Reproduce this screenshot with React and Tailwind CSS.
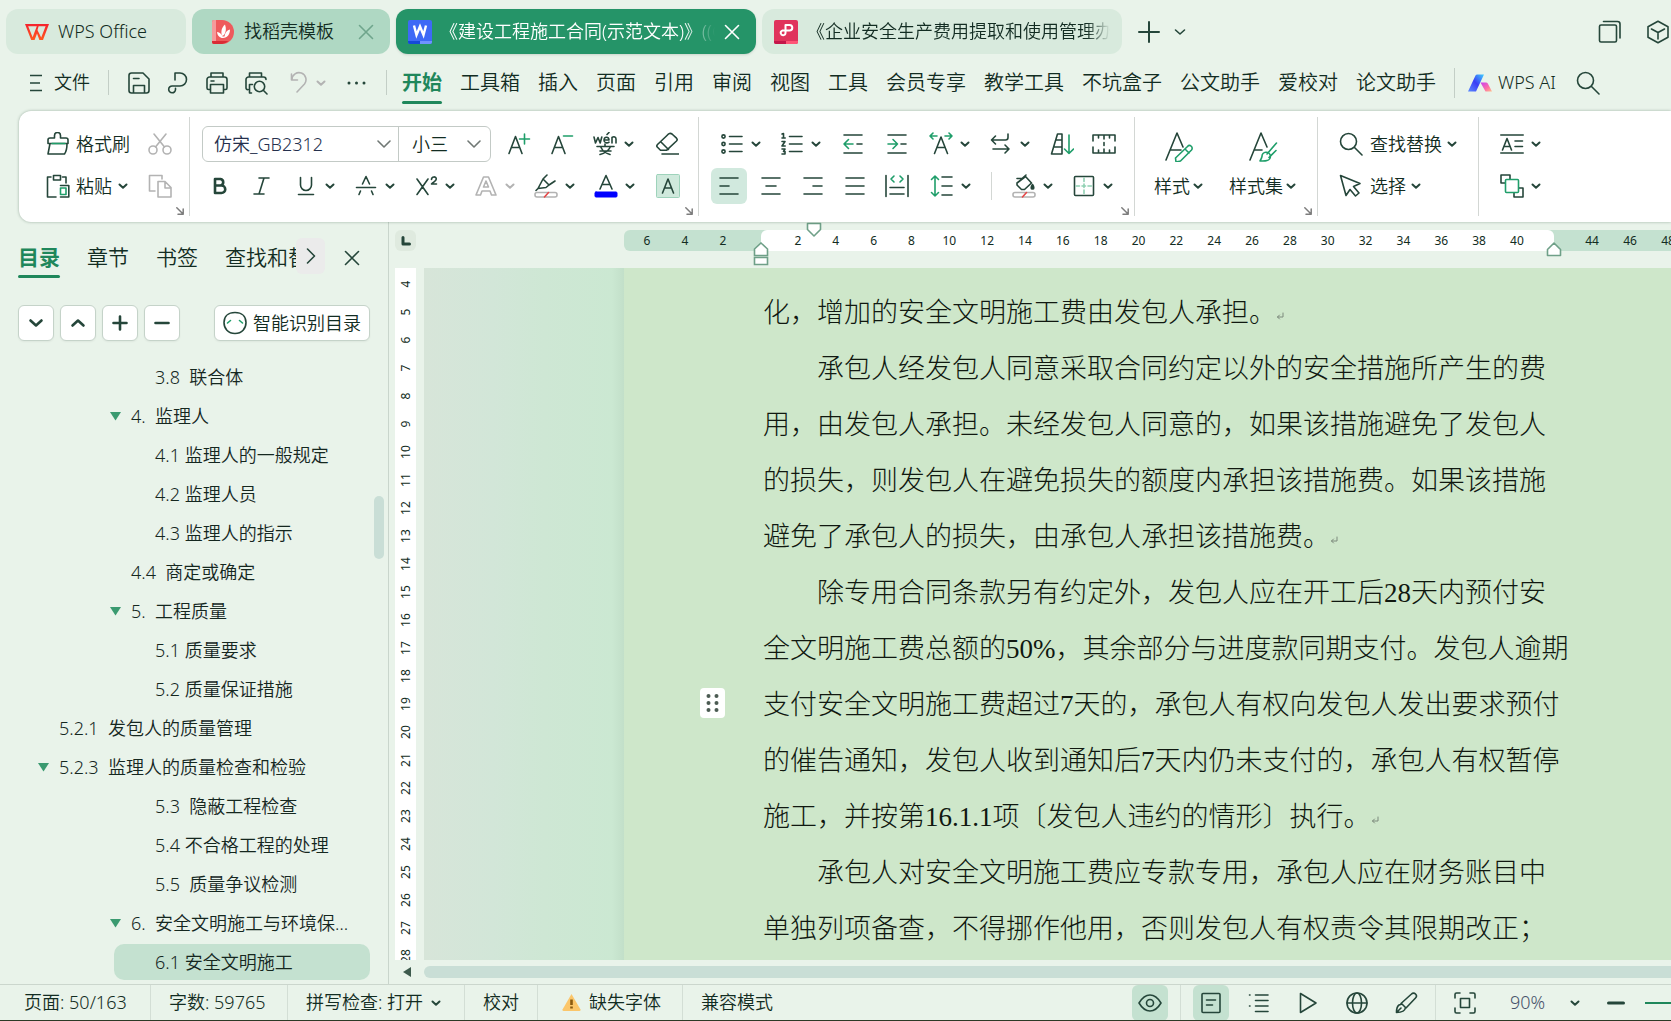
import React, { useState } from 'react';
import clsx from 'clsx';

const DARK = '#25463a';
const GREEN = '#1f9e6a';
const GRAY = '#b3b3b3';

const MENUS = [
  '开始', '工具箱', '插入', '页面', '引用', '审阅', '视图', '工具',
  '会员专享', '教学工具', '不坑盒子', '公文助手', '爱校对', '论文助手',
];

const PANEL_TABS = ['目录', '章节', '书签', '查找和替换'];

const OUTLINE = [
  { text: '3.8  联合体', pad: 'pl-[155px]' },
  { text: '4.  监理人', pad: 'pl-[131px]', arrow: 'left-[110px]' },
  { text: '4.1 监理人的一般规定', pad: 'pl-[155px]' },
  { text: '4.2 监理人员', pad: 'pl-[155px]' },
  { text: '4.3 监理人的指示', pad: 'pl-[155px]' },
  { text: '4.4  商定或确定', pad: 'pl-[131px]' },
  { text: '5.  工程质量', pad: 'pl-[131px]', arrow: 'left-[110px]' },
  { text: '5.1 质量要求', pad: 'pl-[155px]' },
  { text: '5.2 质量保证措施', pad: 'pl-[155px]' },
  { text: '5.2.1  发包人的质量管理', pad: 'pl-[59px]' },
  { text: '5.2.3  监理人的质量检查和检验', pad: 'pl-[59px]', arrow: 'left-[38px]' },
  { text: '5.3  隐蔽工程检查', pad: 'pl-[155px]' },
  { text: '5.4 不合格工程的处理', pad: 'pl-[155px]' },
  { text: '5.5  质量争议检测', pad: 'pl-[155px]' },
  { text: '6.  安全文明施工与环境保…', pad: 'pl-[131px]', arrow: 'left-[110px]' },
];

const LINES = [
  { text: '化，增加的安全文明施工费由发包人承担。', end: true },
  { text: '承包人经发包人同意采取合同约定以外的安全措施所产生的费', indent: true },
  { text: '用，由发包人承担。未经发包人同意的，如果该措施避免了发包人' },
  { text: '的损失，则发包人在避免损失的额度内承担该措施费。如果该措施' },
  { text: '避免了承包人的损失，由承包人承担该措施费。', end: true },
  { text: '除专用合同条款另有约定外，发包人应在开工后28天内预付安', indent: true },
  { text: '全文明施工费总额的50%，其余部分与进度款同期支付。发包人逾期' },
  { text: '支付安全文明施工费超过7天的，承包人有权向发包人发出要求预付' },
  { text: '的催告通知，发包人收到通知后7天内仍未支付的，承包人有权暂停' },
  { text: '施工，并按第16.1.1项〔发包人违约的情形〕执行。', end: true },
  { text: '承包人对安全文明施工费应专款专用，承包人应在财务账目中', indent: true },
  { text: '单独列项备查，不得挪作他用，否则发包人有权责令其限期改正；' },
];

const range = (from, to, step = 1) => {
  const out = [];
  for (let i = from; i <= to; i += step) out.push(i);
  return out;
};

function Icon({ children, color = DARK, size = 24, box = 24, width = 1.6, className }) {
  return (
    <svg
      className={clsx('shrink-0', className)}
      width={size}
      height={size}
      viewBox={`0 0 ${box} ${box}`}
      fill="none"
      stroke={color}
      strokeWidth={width}
      strokeLinecap="round"
      strokeLinejoin="round"
      aria-hidden="true"
    >
      {children}
    </svg>
  );
}

function Caret({ color = DARK }) {
  return (
    <Icon size={10} box={10} width={2} color={color}>
      <path d="M1.5 3.5 5 6.8l3.500-3.300" />
    </Icon>
  );
}

function CloseIcon({ color, size = 16 }) {
  return (
    <Icon size={size} box={16} color={color}>
      <path d="M1.500 1.500l13 13M14.500 1.500l-13 13" />
    </Icon>
  );
}

function Tool({ label, caret, disabled, className, children }) {
  return (
    <button type="button" aria-label={label} className={clsx('flex h-9 shrink-0 items-center gap-[7px]', className)}>
      {children}
      {caret && <Caret color={disabled ? GRAY : DARK} />}
    </button>
  );
}

function Launcher() {
  return (
    <button type="button" aria-label="更多设置" className="absolute right-[5px] bottom-px">
      <Icon size={8} box={8} color="#7d7d7d" width={1.5}>
        <path d="M.8.8l6 6M7.200 2v5.200H2" />
      </Icon>
    </button>
  );
}

function Group({ className, launcher, last, children }) {
  return (
    <section className={clsx('relative h-[99px] shrink-0', !last && 'border-r border-[#d3d7d4]', className)}>
      {children}
      {launcher && <Launcher />}
    </section>
  );
}

function TitleBar() {
  return (
    <header className="flex shrink-0 items-center gap-1.5 pt-[9px] pl-1.5">
      <button type="button" className="flex h-[45px] w-[180px] shrink-0 items-center gap-[9px] rounded-xl bg-[#d8eadd] pl-[19px]">
        <svg width="24" height="18" viewBox="0 0 24 18" aria-hidden="true">
          <defs>
            <linearGradient id="wps" x1="0" y1="0" x2="0" y2="1">
              <stop offset="0" stopColor="#f5222d" />
              <stop offset="1" stopColor="#ff5a1f" />
            </linearGradient>
          </defs>
          <path d="M0 1h24l-6 16h-3.600L12 10.500 9.600 17H6.200zM3.200 3.200l4.400 11 4.200-11zM12.900 8l3.300 6.400L20.600 3.200h-7L12.500 7z" fill="url(#wps)" fillRule="evenodd" />
        </svg>
        WPS Office
      </button>
      <button type="button" className="flex h-[45px] w-[198px] shrink-0 items-center rounded-xl bg-[#afd8c3] pl-5">
        <svg width="22" height="24" viewBox="0 0 22 24" aria-hidden="true">
          <path d="M0 2a2 2 0 0 1 2-2h8a12 12 0 0 1 0 24H2a2 2 0 0 1-2-2z" fill="#ee5a5c" />
          <path d="M0 2a2 2 0 0 1 2-2h2v21H0z" fill="#f59a9b" />
          <path d="M0 21h16.500A12 12 0 0 1 10 24H2a2 2 0 0 1-2-2z" fill="#d92b35" />
          <path d="M10 16C8.500 11 10 7 13 4.500c1.500 4 1 7.500-1 10.500z" fill="#fff" />
          <path d="M12.500 16.500c.5-4 2.500-6.500 5.500-7 0 4.500-2.500 8.500-7 8.500-3.500 0-5.500-2.500-6-6 3 .5 4.500 2 5.500 4.500z" fill="#fff" />
        </svg>
        <span className="ml-2.5">找稻壳模板</span>
        <span className="ml-6"><CloseIcon color="#6fa58c" /></span>
      </button>
      <button type="button" className="flex h-[45px] w-[360px] shrink-0 items-center rounded-xl bg-[#259468] pl-3 text-white shadow-sm">
        <svg className="shrink-0" width="24" height="24" viewBox="0 0 24 24" aria-hidden="true">
          <rect width="24" height="24" rx="2" fill="#3e69f6" />
          <path d="M0 21h12v3H2a2 2 0 0 1-2-2z" fill="#1549d8" />
          <path d="M12 21h12v1a2 2 0 0 1-2 2H12z" fill="#6f93ff" />
          <path d="M6 5.500 8.500 15 12 6.500 15.500 15 18 5.500" fill="none" stroke="#fff" strokeWidth="2.400" />
        </svg>
        <span className="ml-2 w-[276px] overflow-hidden text-left whitespace-nowrap [mask-image:linear-gradient(to_right,#000_245px,transparent_275px)]">《建设工程施工合同(示范文本)》((G</span>
        <span className="ml-2"><CloseIcon color="#fff" /></span>
      </button>
      <button type="button" className="flex h-[45px] w-[360px] shrink-0 items-center rounded-xl bg-[#d8eadd] pl-3">
        <svg className="shrink-0" width="24" height="24" viewBox="0 0 24 24" aria-hidden="true">
          <rect width="24" height="24" rx="2" fill="#e0335c" />
          <path d="M0 21h12v3H2a2 2 0 0 1-2-2z" fill="#c4164a" />
          <path d="M12 21h12v1a2 2 0 0 1-2 2H12z" fill="#ff5577" />
          <path d="M11.500 10.500V5h4a2.800 2.800 0 0 1 0 5.600H8.200a2.400 2.400 0 1 0 3.300 2.400z" fill="none" stroke="#fff" strokeWidth="2" strokeLinejoin="round" />
        </svg>
        <span className="ml-[9px] w-[303px] overflow-hidden text-left whitespace-nowrap [mask-image:linear-gradient(to_right,#000_280px,transparent_303px)]">《企业安全生产费用提取和使用管理办法》</span>
      </button>
      <button type="button" aria-label="新建" className="ml-[9px]">
        <Icon width={2}><path d="M12 2v20M2 12h20" /></Icon>
      </button>
      <button type="button" aria-label="标签列表" className="ml-[7px]">
        <Icon size={12} box={12}><path d="M1.500 4 6 8l4.500-4" /></Icon>
      </button>
      <div className="ml-auto flex gap-6 pr-px">
        <button type="button" aria-label="窗口">
          <Icon>
            <rect x="1.500" y="5" width="17" height="17" rx="1.500" />
            <path d="M5.500 1.500h14A2.500 2.500 0 0 1 22 4v14" />
          </Icon>
        </button>
        <button type="button" aria-label="应用">
          <Icon>
            <path d="M12 1.200 22 6.700v10.600l-10 5.500-10-5.500V6.700zM5.500 9l6.500 3.500L18.500 9M12 12.500v6.500" />
          </Icon>
        </button>
      </div>
    </header>
  );
}

function MenuBar() {
  const [active, setActive] = useState('开始');
  return (
    <nav className="flex h-[57px] shrink-0 items-center pl-[30px]">
      <button type="button" className="flex shrink-0 items-center gap-3">
        <svg width="12" height="18" viewBox="0 0 12 18" stroke={DARK} strokeWidth="1.600" aria-hidden="true">
          <path d="M0 1.500h12M0 9h10M0 16.500h12" />
        </svg>
        文件
      </button>
      <span className="ml-[18px] h-[25px] w-px bg-[#c3cec6]" />
      <div className="ml-[18px] flex items-center gap-[15px]">
        <button type="button" aria-label="保存">
          <Icon><path d="M6.500 22H4.500A2.500 2.500 0 0 1 2 19.500v-15A2.500 2.500 0 0 1 4.500 2H16l6 6v11.500a2.500 2.500 0 0 1-2.500 2.500zM6.500 22v-7.500h11V22M6.500 7.500H12" /></Icon>
        </button>
        <button type="button" aria-label="分享">
          <Icon><path d="M9 9V2h5a6.500 6.500 0 0 1 0 13H6.200a3.400 3.400 0 1 0 3.300 3.400v-1" /></Icon>
        </button>
        <button type="button" aria-label="打印">
          <Icon><path d="M6 6V2h12v4M5 18.500H3.500A1.500 1.500 0 0 1 2 17V8.500A2.500 2.500 0 0 1 4.500 6h15A2.500 2.500 0 0 1 22 8.500V17a1.500 1.500 0 0 1-1.500 1.500H19M5.500 13.500h13V22h-13zM6 10h3" /></Icon>
        </button>
        <button type="button" aria-label="打印预览">
          <Icon><path d="M5.500 6V2h12v4M4 18.500A1.500 1.500 0 0 1 2 17V8.500A2.500 2.500 0 0 1 4.500 6h15A2.500 2.500 0 0 1 22 8.500M7.500 22H5.500v-8.500h3" /><circle cx="15.500" cy="15.500" r="5.200" /><path d="M19.500 19.500 23 23" /></Icon>
        </button>
        <button type="button" aria-label="撤销" className="ml-1.5 flex items-center gap-[3px]">
          <Icon color={GRAY}><path d="M2.500 3v6h6M3 8.500A7 7 0 1 1 15.500 13L8 21" /></Icon>
          <Caret color={GRAY} />
        </button>
        <button type="button" aria-label="更多">
          <svg width="30" height="24" viewBox="0 0 30 24" fill={DARK} aria-hidden="true">
            <circle cx="8" cy="12" r="1.500" /><circle cx="15.500" cy="12" r="1.500" /><circle cx="23" cy="12" r="1.500" />
          </svg>
        </button>
      </div>
      <span className="ml-[15px] h-[25px] w-px bg-[#c3cec6]" />
      <div className="ml-[15px] flex shrink-0 gap-[18px] text-[20px]">
        {MENUS.map((name) => (
          <button
            key={name}
            type="button"
            onClick={() => setActive(name)}
            className={clsx('relative h-[42px] whitespace-nowrap', name === active && 'font-bold text-[#1f875b]')}
          >
            {name}
            {name === active && <span className="absolute inset-x-0 bottom-0 h-[3px] rounded-full bg-[#1f875b]" />}
          </button>
        ))}
      </div>
      <span className="ml-[18px] h-[30px] w-px shrink-0 bg-[#c3cec6]" />
      <button type="button" className="ml-[13px] flex shrink-0 items-center gap-1.5">
        <svg width="24" height="18" viewBox="0 0 24 18" aria-hidden="true">
          <defs>
            <linearGradient id="ai-a" x1="0" y1="1" x2="1" y2="0">
              <stop offset="0" stopColor="#5b8cff" />
              <stop offset=".5" stopColor="#3a3df5" />
              <stop offset="1" stopColor="#3fd0ff" />
            </linearGradient>
            <linearGradient id="ai-b" x1="0" y1="0" x2="1" y2="1">
              <stop offset="0" stopColor="#c63df5" />
              <stop offset=".6" stopColor="#ff6fa5" />
              <stop offset="1" stopColor="#ffc08a" />
            </linearGradient>
          </defs>
          <path d="M0 17.500 7.500 1.500A2 2 0 0 1 9.300.500H16L8 17.500z" fill="url(#ai-a)" />
          <path d="M12.500 8.500h5.500a2 2 0 0 1 1.800 1L24 17.500h-6.500z" fill="url(#ai-b)" />
        </svg>
        WPS AI
      </button>
      <button type="button" aria-label="搜索" className="ml-5">
        <Icon><circle cx="9.500" cy="9.500" r="8" /><path d="M15.500 15.500 23 23" /></Icon>
      </button>
    </nav>
  );
}

function ClipboardGroup() {
  return (
    <Group className="w-[171px] pt-[9px] pl-[27px]" launcher>
      <div className="flex h-9 items-center">
        <button type="button" className="flex items-center gap-1.5">
          <Icon>
            <path d="M8.500 6V3.500a3 3 0 0 1 6 0V6H20a2 2 0 0 1 2 2v3.500H2V8a2 2 0 0 1 2-2zM4 11.500 2 22h16.500c1.500-2 2.500-6 2.500-10.500" />
            <path d="M6 11.500h13" stroke={GREEN} />
          </Icon>
          格式刷
        </button>
        <button type="button" aria-label="剪切" className="ml-[18px]">
          <Icon color={GRAY}><circle cx="5" cy="18" r="4" /><circle cx="19" cy="18" r="4" /><path d="M6 2l10.500 13M18 2 7.500 15" /></Icon>
        </button>
      </div>
      <div className="mt-1.5 flex h-9 items-center">
        <button type="button" className="flex items-center gap-1.5">
          <Icon>
            <path d="M5 3H1.500v20H10M16.500 3H20v6M7.500 1.500h7V6h-7zM14.500 11.500h8.300V23h-8.300" />
            <path d="M14.500 14h5.500v6.500h-5.500z" stroke={GREEN} />
          </Icon>
          粘贴
          <Caret />
        </button>
        <button type="button" aria-label="复制" className="ml-5">
          <Icon color={GRAY}><path d="M7 17H1.500V1.500H14V5M10 7.500h7l6 6V23H10zM17 7.500V14h6" /></Icon>
        </button>
      </div>
    </Group>
  );
}

function FontGroup() {
  return (
    <Group className="w-[509px] pt-[9px] pl-[12px]" launcher>
      <div className="flex h-9 items-center">
        <div className="flex h-9 w-[289px] rounded-md border border-[#c3cac6]">
          <div className="relative w-[196px] border-r border-[#c3cac6]">
            <select aria-label="字体" className="size-full appearance-none pl-[11px] text-[#25304d]">
              <option>仿宋_GB2312</option>
            </select>
            <Icon size={14} box={14} color="#707874" className="pointer-events-none absolute top-2.5 right-[7px]"><path d="M1 4l6 6 6-6" /></Icon>
          </div>
          <div className="relative flex-1">
            <select aria-label="字号" className="size-full appearance-none pl-[13px]">
              <option>小三</option>
            </select>
            <Icon size={14} box={14} color="#707874" className="pointer-events-none absolute top-2.5 right-[9px]"><path d="M1 4l6 6 6-6" /></Icon>
          </div>
        </div>
        <Tool label="增大字号" className="ml-4 w-[43px]">
          <Icon><path d="M2 21.500 8.500 4.500 15 21.500M4.500 15.500h8" /><path d="M17.500 2v10M12.500 7h10" stroke={GREEN} /></Icon>
        </Tool>
        <Tool label="减小字号" className="w-[43px]">
          <Icon><path d="M2 21.500 8.500 4.500 15 21.500M4.500 15.500h8" /><path d="M13.500 4h9" stroke={GREEN} /></Icon>
        </Tool>
        <Tool label="拼音指南" caret className="w-[62px]">
          <Icon>
            <path d="M1 5l1.500 6L5 5.500 7.200 11 8.800 5M11 8h5c0-4-5-3.500-5 .2 0 3 3.500 3.200 5 2M14 2.500 16 .5M19 11V5.500c2-1.500 4-.5 4 1.500v4" />
            <path d="M4 14.500h17M12 12v2.500M8 15.500c2 4 5 6 9 7M17 15.500c-2 4-6 6-10 7M7 19h11" />
          </Icon>
        </Tool>
        <Tool label="清除格式">
          <Icon><path d="M12.500 3 2.500 12.500a2 2 0 0 0 0 2.800l3 3h6L21.500 9a2 2 0 0 0 0-2.800L17 2a3 3 0 0 0-4.500 1zM6 10l7.500 7.500M7 22h17" /></Icon>
        </Tool>
      </div>
      <div className="mt-1.5 flex h-9 items-center pl-1.5">
        <Tool label="加粗" className="w-[43px]">
          <Icon width={2.6}><path d="M7 5h5.500a3.300 3.300 0 0 1 0 6.500H7zM7 11.500h6.500a3.600 3.600 0 0 1 0 7.500H7z" /></Icon>
        </Tool>
        <Tool label="倾斜" className="w-[43px]">
          <Icon><path d="M8 4h10M3 20h10M13 4 8 20" /></Icon>
        </Tool>
        <Tool label="下划线" caret className="w-[60px]">
          <Icon><path d="M6.500 3.500V11a5.500 5.500 0 0 0 11 0V3.500M4.500 20.500h15" /></Icon>
        </Tool>
        <Tool label="删除线" caret className="w-[60px]">
          <Icon><path d="M2.500 13.500h19M8.500 10l3.500-7.500L15.500 10M5 20.500l1.500-3.500M19 20.500 17.500 17" /></Icon>
        </Tool>
        <Tool label="上标" caret className="w-[60px]">
          <Icon><path d="M3 5l11 15.500M14 5 3 20.500M17.500 5.500c0-3.500 4.800-3.200 4.800-.5 0 2-3 3-4.800 5h5" /></Icon>
        </Tool>
        <Tool label="文字效果" caret disabled className="w-[60px]">
          <Icon color={GRAY}><path d="M2 21 9.500 3h5L22 21h-4.500L16 17H8l-1.500 4zM9.500 13h5L12 7z" /></Icon>
        </Tool>
        <Tool label="突出显示" caret className="w-[60px]">
          <Icon>
            <path d="M4 14.500 9 5l4-4M9 5l6 6 6-4M4 14.500l8-1 3-2.500M2 16.500l2-2" />
            <rect x="1" y="18.500" width="22" height="4.500" rx="2" stroke={GRAY} />
            <path d="M10.500 23l4-4.500" stroke="#e54848" />
          </Icon>
        </Tool>
        <Tool label="字体颜色" caret className="w-[62px]">
          <Icon><path d="M6 15 12 1.500 18 15M8 10.500h8" /><rect x="1" y="18" width="22" height="5" rx="1" fill="#00f" stroke="#00f" strokeWidth="1" /></Icon>
        </Tool>
        <Tool label="字符底纹">
          <Icon><rect x=".5" y=".5" width="23" height="23" rx="1" fill="#cfe9dc" stroke="#9ed3bb" strokeWidth="1" /><path d="M6.500 19 12 5l5.500 14M8.500 14h7" /></Icon>
        </Tool>
      </div>
    </Group>
  );
}

function ParagraphGroup() {
  return (
    <Group className="w-[436px] pt-[9px] pl-[12px]" launcher>
      <div className="flex h-9 items-center pl-[9px]">
        <Tool label="项目符号" caret className="w-[60px]">
          <Icon><circle cx="3.500" cy="4.500" r="1.600" /><circle cx="3.500" cy="12" r="1.600" /><circle cx="3.500" cy="19.500" r="1.600" /><path d="M9.500 4.500H22M9.500 12H22M9.500 19.500H22" /></Icon>
        </Tool>
        <Tool label="编号" caret className="w-[60px]">
          <Icon><path d="M9.500 4.500H22M9.500 12H22M9.500 19.500H22" /><path d="M2 2l1.500-.5V6M2 6h3.200M2 9.500h3L2 14h3.200M2 17h3l-1.500 2.500H5V22H2" /></Icon>
        </Tool>
        <Tool label="减少缩进" className="w-[45px] pl-px">
          <Icon><path d="M3 3h18M3 21h18M16 12h5" /><path d="M12 12H3M7.500 7.500 3 12l4.500 4.500" stroke={GREEN} /></Icon>
        </Tool>
        <Tool label="增加缩进" className="w-[44px]">
          <Icon><path d="M3 3h18M3 21h18M16 12h5" /><path d="M3 12h9.500M8 7.500l4.500 4.500L8 16.500" stroke={GREEN} /></Icon>
        </Tool>
        <Tool label="中文版式" caret className="w-[60px]">
          <Icon><path d="M5.500 21.500 12 5l6.500 16.500M8 15.500h8" /><path d="M8 4H1M4 1 1 4l3 3M16 4h7M20 1l3 3-3 3" stroke={GREEN} /></Icon>
        </Tool>
        <Tool label="段落换行" caret className="w-[61px]">
          <Icon><path d="M19 2v3.500A2.500 2.500 0 0 1 16.500 8H2.500M6.500 4 2.500 8l4 4M4 17h16M16 13l4 4-4 4" /></Icon>
        </Tool>
        <Tool label="排序" className="w-[42px]">
          <Icon><path d="M7.500 2h4.500v20H1.500zM6 8h6M4 15h8" /><path d="M19 3v18.500M14.500 17l4.500 4.500 4.500-4.500" stroke={GREEN} /></Icon>
        </Tool>
        <Tool label="表格">
          <Icon><path d="M1 9V3h22v6M1 15v6h22v-6M6.500 3v3M12 3v4M17.500 3v3M6.500 21v-3M12 21v-4M17.500 21v-3M12 10.500v3" /></Icon>
        </Tool>
      </div>
      <div className="mt-1.5 flex h-9 items-center gap-1.5">
        <Tool label="左对齐" className="w-9 justify-center rounded-md bg-[#d1e9de]">
          <Icon><path d="M3 4h18M3 12h9M3 20h18" /></Icon>
        </Tool>
        <Tool label="居中" className="w-9 justify-center"><Icon><path d="M3 4h18M7 12h10M3 20h18" /></Icon></Tool>
        <Tool label="右对齐" className="w-9 justify-center"><Icon><path d="M3 4h18M12 12h9M3 20h18" /></Icon></Tool>
        <Tool label="两端对齐" className="w-9 justify-center"><Icon><path d="M3 4h18M3 12h18M3 20h18" /></Icon></Tool>
        <Tool label="分散对齐" className="w-9 justify-center">
          <Icon><path d="M1 1.500v21M23 1.500v21M5 13.500h14M5 20h14" /><path d="M9 2 6 5l3 3M15 2l3 3-3 3" stroke={GREEN} /></Icon>
        </Tool>
        <Tool label="行距" caret className="ml-[9px]">
          <Icon><path d="M12 3h10M12 12h10M12 21h10" /><path d="M5 2v20M1.500 5.500 5 2l3.500 3.500M1.500 18.500 5 22l3.500-3.500" stroke={GREEN} /></Icon>
        </Tool>
        <span className="mx-[14px] h-7 w-px bg-[#d3d7d4]" />
        <Tool label="底纹颜色" caret>
          <Icon>
            <path d="M5 9l8.500-6.500 6 6.500-7 6.500H9.500L5 11zM5 4.500h5l4-3.500" />
            <path d="M20.500 10.500c-2 3-1.500 4.500 0 4.500s2-1.500 0-4.500z" fill={DARK} />
            <rect x="1" y="18.500" width="22" height="4.500" rx="2" stroke={GRAY} />
            <path d="M10.500 23l4-4.500" stroke="#e54848" />
          </Icon>
        </Tool>
        <Tool label="边框" caret className="ml-[13px]">
          <Icon><rect x="2.500" y="2.500" width="19" height="19" rx="1" /><path d="M12 4v16M4 12h16" stroke="#8fd0b2" strokeDasharray="3.500 2.500" /></Icon>
        </Tool>
      </div>
    </Group>
  );
}

function Ribbon() {
  return (
    <div className="relative z-10 ml-[19px] flex h-[111px] shrink-0 overflow-hidden rounded-l-xl bg-white pt-1.5 shadow-[0_0_3px_rgba(60,90,70,0.45)]">
      <ClipboardGroup />
      <FontGroup />
      <ParagraphGroup />
      <Group className="flex w-[183px] items-start gap-[26px] pt-[15px] pl-[19px]" launcher>
        <button type="button" className="flex shrink-0 flex-col items-center gap-[9px]">
          <Icon size={30} box={30}>
            <path d="M2 28 13 1l6 14M6 18h11" />
            <path d="M23.500 14.500a2.600 2.600 0 0 1 4 3.500L16.500 29l-4.500 1-.5-4zM21 17l4 4" stroke={GREEN} />
          </Icon>
          <span className="flex items-center gap-[3px] leading-[30px]">
            样式
            <Caret />
          </span>
        </button>
        <button type="button" className="flex shrink-0 flex-col items-center gap-[9px]">
          <Icon size={30} box={30}>
            <path d="M2 28 13 1l6 14M6 18h8" />
            <path d="M28.500 11 19 22M28 18.500l-7 7M12 29c1-1.500 1.500-2.500 2-4.500a4.200 4.200 0 1 1 5 4c-2 .8-5 .5-7 .5z" stroke={GREEN} />
          </Icon>
          <span className="flex items-center gap-[3px] leading-[30px]">
            样式集
            <Caret />
          </span>
        </button>
      </Group>
      <Group className="w-[161px] pt-[9px] pl-[21px]">
        <Tool>
          <Icon><circle cx="9.500" cy="9.500" r="8" /><path d="M15.500 15.500 23 23" /></Icon>
          <span className="flex items-center gap-[5px]">
            查找替换
            <Caret />
          </span>
        </Tool>
        <Tool className="mt-1.5">
          <Icon><path d="M1.500 1.500 7 21.500l4-6 5.500 6.500 3.500-3-5.500-6.500 6.500-3z" /></Icon>
          <span className="flex items-center gap-[5px]">
            选择
            <Caret />
          </span>
        </Tool>
      </Group>
      <Group className="pt-[9px] pl-[21px]" last>
        <Tool label="文字排列" caret>
          <Icon><path d="M.8 3h22.400M.8 21h22.400M2.500 18 7 6.500 11.500 18M4 14.500h6M15 9h7.500M15 14.500h7.500" /></Icon>
        </Tool>
        <Tool label="排列" caret className="mt-1.5">
          <Icon><path d="M5 9H1V1h9v4M19 14h4v9h-9v-4" /><rect x="5.500" y="5.500" width="13" height="13" rx="1" stroke={GREEN} /></Icon>
        </Tool>
      </Group>
    </div>
  );
}

function SquareButton({ label, children }) {
  return (
    <button type="button" aria-label={label} className="flex size-9 items-center justify-center rounded-md border border-[#c5d3c9] bg-white shadow-xs">
      <Icon size={16} box={16} width={2.6}>{children}</Icon>
    </button>
  );
}

function OutlinePanel() {
  const [tab, setTab] = useState('目录');
  return (
    <aside className="relative flex w-[389px] shrink-0 flex-col overflow-hidden border-r border-[#c9d5cc]">
      <div className="flex h-[56px] shrink-0 items-start pt-4 pl-[18px]">
        <div className="flex w-[278px] gap-[27px] overflow-hidden text-[21px]">
          {PANEL_TABS.map((name) => (
            <button
              key={name}
              type="button"
              onClick={() => setTab(name)}
              className={clsx('relative h-10 shrink-0 pb-px whitespace-nowrap', name === tab && 'font-bold text-[#1f875b]')}
            >
              {name}
              {name === tab && <span className="absolute inset-x-0 bottom-0 h-[3px] rounded-full bg-[#1f875b]" />}
            </button>
          ))}
        </div>
        <button type="button" aria-label="后翻" className="flex h-9 w-[29px] items-center justify-center rounded-md bg-[#ebebeb]">
          <Icon size={16} box={16}><path d="M4.500 1l7 7-7 7" /></Icon>
        </button>
        <button type="button" aria-label="关闭" className="mt-3 ml-[19px]"><CloseIcon color={DARK} /></button>
      </div>
      <div className="mt-[27px] flex shrink-0 gap-1.5 pl-[18px]">
        <SquareButton label="展开"><path d="M2.500 5.500 8 10.500l5.500-5" /></SquareButton>
        <SquareButton label="收起"><path d="M2.500 10.500 8 5.500l5.500 5" /></SquareButton>
        <SquareButton label="升级"><path d="M8 1.500v13M1.500 8h13" /></SquareButton>
        <SquareButton label="降级"><path d="M1.500 8h13" /></SquareButton>
        <button type="button" className="ml-7 flex h-9 w-[156px] items-center gap-1.5 rounded-md border border-[#c5d3c9] bg-white pl-2 shadow-xs">
          <Icon>
            <path d="M12 1.500c7 0 11 4 11 10s-4 11-11 11-11-5-11-11 4-10 11-10z" />
            <path d="M4.500 12l3-2.500M19.500 12l-3-2.500" stroke={GREEN} />
          </Icon>
          智能识别目录
        </button>
      </div>
      <ul className="mt-[17px] min-h-0 flex-1">
        {OUTLINE.map(({ text, pad, arrow }) => (
          <li key={text} className="relative">
            {arrow && (
              <svg className={clsx('absolute top-[15px]', arrow)} width="11" height="9" viewBox="0 0 11 9" aria-hidden="true">
                <path d="M0 0h11L5.500 8.500z" fill="#3a9a70" />
              </svg>
            )}
            <button type="button" className={clsx('block h-[39px] w-full text-left whitespace-pre text-[#15271f]', pad)}>{text}</button>
          </li>
        ))}
        <li className="pt-px pr-[18px] pl-[114px]">
          <button type="button" className="block h-9 w-full rounded-[10px] bg-[#c4e1d0] pl-[41px] text-left text-[#15271f]">6.1 安全文明施工</button>
        </li>
      </ul>
      <span className="absolute top-[274px] right-1 h-[63px] w-2.5 rounded-full bg-[#c9ded6]" />
    </aside>
  );
}

function RulerMarks({ marks, className }) {
  return (
    <div className={clsx('flex h-[21px] shrink-0 items-center pt-px text-[12px] font-normal', className)}>
      {marks.map((n) => <span key={n} className="w-[38px] min-w-0 shrink text-center">{n}</span>)}
    </div>
  );
}

function HorizontalRuler() {
  return (
    <div className="relative flex h-[46px] shrink-0 overflow-hidden pt-2 pl-1.5">
      <button type="button" aria-label="制表位" className="flex size-[21px] shrink-0 items-center justify-center rounded-md bg-[#dfeadf]">
        <Icon size={10} box={10} width={3}><path d="M2 1.500V8h6.500" /></Icon>
      </button>
      <div className="ml-52 flex flex-1 items-start">
        <RulerMarks marks={[6, 4, 2]} className="w-[137px] rounded-l-md bg-[#c4e1d0] pl-1" />
        <div className="bg-[#c4e1d0]">
          <RulerMarks marks={range(2, 40, 2)} className="w-[793px] rounded-md bg-white px-[18px]" />
        </div>
        <RulerMarks marks={[44, 46, 48]} className="w-[137px] bg-[#c4e1d0] pl-[19px]" />
      </div>
      <Icon size={16} box={16} color="#6fa088" className="absolute top-0 left-[417px]"><path d="M1.500 1.500h13v6L8 14 1.500 7.500z" fill="#fff" /></Icon>
      <svg className="absolute top-5 left-[364px]" width="16" height="24" viewBox="0 0 16 24" fill="#fff" stroke="#6fa088" strokeWidth="1.600" aria-hidden="true">
        <path d="M8 1l6.500 6v6.500h-13V7zM1.500 15.500h13v7h-13z" />
      </svg>
      <Icon size={16} box={16} color="#6fa088" className="absolute top-5 left-[1157px]"><path d="M8 1l6.500 6.500v6h-13v-6z" fill="#fff" /></Icon>
    </div>
  );
}

function Page() {
  return (
    <div className="flex min-h-0 flex-1">
      <div className="ml-1.5 w-[21px] shrink-0 overflow-hidden bg-white pt-0.5">
        {range(4, 28).map((n) => (
          <div key={n} className="flex h-7 -rotate-90 items-center justify-center text-[12px] font-normal">{n}</div>
        ))}
      </div>
      <div className="ml-2 flex min-w-0 flex-1 overflow-hidden">
        <div className="w-[200px] shrink-0 bg-[linear-gradient(to_right,#d7e5d9,#d2e6d8_35%,#cee7d4_60%,#cbe8d2_94%,#c2dfc9)]" />
        <article className="relative flex-1 bg-[#cee7ca] pt-[17px] pl-[139px]">
          {LINES.map(({ text, indent, end }) => (
            <p key={text} className={clsx('h-14 font-[Liberation_Serif,Noto_Sans_CJK_SC,serif] text-[27px] leading-14 font-light whitespace-nowrap text-[#101810]', indent && 'indent-[54px]')}>
              {text}
              {end && <Icon size={8} box={8} width={1} color="#7d8a7c" className="inline"><path d="M7 1v4H1.500M3.500 3l-2 2 2 2" /></Icon>}
            </p>
          ))}
          <button type="button" aria-label="段落操作" className="absolute top-[420px] left-[76px] flex h-[30px] w-[25px] items-center justify-center rounded bg-white">
            <svg width="13" height="20" viewBox="0 0 13 20" fill="#4b5b52" aria-hidden="true">
              <circle cx="2.500" cy="3" r="2" /><circle cx="10.500" cy="3" r="2" />
              <circle cx="2.500" cy="10" r="2" /><circle cx="10.500" cy="10" r="2" />
              <circle cx="2.500" cy="17" r="2" /><circle cx="10.500" cy="17" r="2" />
            </svg>
          </button>
        </article>
      </div>
    </div>
  );
}

function StatusItem({ children, className }) {
  return (
    <div className={clsx('flex shrink-0 items-center border-r border-[#d3ded5] px-[18px] whitespace-nowrap', className)}>{children}</div>
  );
}

function StatusBar() {
  return (
    <footer className="flex h-[37px] shrink-0 overflow-hidden border-t border-b border-t-[#cbd6cd] border-b-[#2c3a26]">
      <StatusItem className="w-[151px] pl-6">页面: 50/163</StatusItem>
      <StatusItem className="w-[137px]">字数: 59765</StatusItem>
      <StatusItem className="w-[177px]">
        <button type="button" className="flex items-center gap-2">
          拼写检查: 打开
          <Caret />
        </button>
      </StatusItem>
      <StatusItem>校对</StatusItem>
      <StatusItem className="w-[145px] gap-2 pl-6">
        <svg width="19" height="17" viewBox="0 0 19 17" aria-hidden="true">
          <path d="M9.500 0 18.500 15.500q.3 1.500-1.200 1.500H1.700Q.2 17 .5 15.500z" fill="#fbc66a" />
          <path d="M8.200 5.500h2.600v5.500H8.200zM8.200 12.500h2.600v2H8.200z" fill="#8a5a10" />
        </svg>
        缺失字体
      </StatusItem>
      <span className="flex shrink-0 items-center pl-[18px]">兼容模式</span>
      <div className="ml-auto flex w-[539px] shrink-0 items-center">
        <button type="button" aria-label="护眼模式" className="flex size-9 shrink-0 items-center justify-center rounded-md bg-[#c4e1d0]">
          <Icon><path d="M1 12c3-5 6.500-8 11-8s8 3 11 8c-3 5-6.500 8-11 8s-8-3-11-8z" /><circle cx="12" cy="12" r="3.500" /></Icon>
        </button>
        <span className="mx-3 h-9 w-px shrink-0 bg-[#d3ded5]" />
        <button type="button" aria-label="页面视图" className="flex size-9 shrink-0 items-center justify-center rounded-md bg-[#c4e1d0]">
          <Icon><rect x="3" y="2.500" width="18" height="19" rx="1" /><path d="M7.500 9h9M7.500 14h6" /></Icon>
        </button>
        <div className="ml-[18px] flex shrink-0 gap-[25px]">
          <button type="button" aria-label="大纲"><Icon><path d="M2.500 4h.5M8.500 4H21M8.500 9.500H21M2.500 15h.5M8.500 15H21M8.500 20.500H21" /></Icon></button>
          <button type="button" aria-label="阅读版式"><Icon><path d="M4.500 2.500v19L20 12z" /></Icon></button>
          <button type="button" aria-label="Web 版式"><Icon><circle cx="12" cy="12" r="10" /><ellipse cx="12" cy="12" rx="4.500" ry="10" /><path d="M2 12h20" /></Icon></button>
          <button type="button" aria-label="写作模式"><Icon><path d="M2.500 21.500c0-4 .5-6 2.500-7.500l3-1 3.500 3.500c-.5 3.500-4 5-9 5zM7 12.500 17.500 3a2.800 2.800 0 0 1 4 4L12 17M2.500 21.500 7 17" /></Icon></button>
        </div>
        <span className="mx-[17px] h-9 w-px shrink-0 bg-[#d3ded5]" />
        <button type="button" aria-label="适合窗口" className="shrink-0">
          <Icon><path d="M2 7V3.500A1.500 1.500 0 0 1 3.500 2H7M17 2h3.500A1.500 1.500 0 0 1 22 3.500V7M22 17v3.500a1.500 1.500 0 0 1-1.500 1.500H17M7 22H3.500A1.500 1.500 0 0 1 2 20.500V17M7.500 7.500h9v9h-9z" /></Icon>
        </button>
        <button type="button" className="ml-[33px] flex shrink-0 items-center text-[#47526b]">
          <span className="w-[60px] text-left">90%</span>
          <Caret />
        </button>
        <button type="button" aria-label="缩小" className="ml-[26px] shrink-0">
          <Icon width={3} size={20} box={20}><path d="M2.500 10h15" /></Icon>
        </button>
        <input type="range" aria-label="显示比例" className="ml-[19px] h-0.5 w-[200px] shrink-0 appearance-none bg-[#1f875b]" />
      </div>
    </footer>
  );
}

function App() {
  return (
    <div className="flex h-screen flex-col overflow-hidden bg-[#e9f3ea] font-[Noto_Sans,Noto_Sans_CJK_SC,sans-serif] text-[18px] font-[350] text-[#122c22]">
      <TitleBar />
      <MenuBar />
      <Ribbon />
      <main className="flex min-h-0 flex-1">
        <OutlinePanel />
        <div className="flex min-w-0 flex-1 flex-col">
          <HorizontalRuler />
          <Page />
          <div className="flex h-6 shrink-0 items-center pl-3.5">
            <svg width="8" height="10" viewBox="0 0 8 10" aria-hidden="true"><path d="M8 0v10L0 5z" fill="#3d5a4d" /></svg>
            <span className="ml-[13px] h-3 flex-1 rounded-l-full bg-[#c9ded6]" />
          </div>
        </div>
      </main>
      <StatusBar />
    </div>
  );
}

export default App;
